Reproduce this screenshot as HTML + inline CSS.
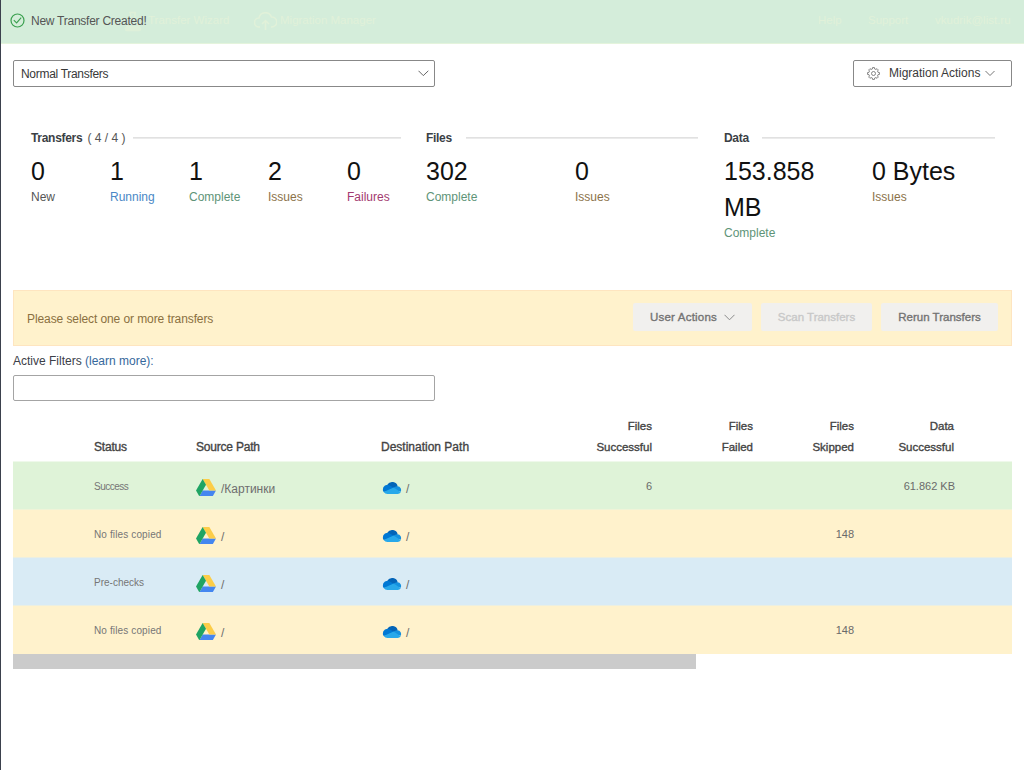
<!DOCTYPE html>
<html><head><meta charset="utf-8">
<style>
*{box-sizing:border-box;margin:0;padding:0}
html,body{width:1024px;height:770px;overflow:hidden;background:#fff}
body{position:relative;font-family:"Liberation Sans",sans-serif;color:#333}
.a{position:absolute;white-space:nowrap}
#lb{left:0;top:0;width:1px;height:770px;background:#3b414d}
#hdr{left:1px;top:0;width:1023px;height:44px;background:#d4edda;border-bottom:1px solid #e4f4dc}
.nav{color:#e1f1d9;font-size:11.5px}
.toast{color:#555;font-size:12px;letter-spacing:-0.25px;left:31px;top:14px}
.sel{border:1px solid #888;border-radius:2px;background:#fff}
.stitle{font-size:12px;font-weight:bold;color:#3b3f45;letter-spacing:-0.3px}
.sub{font-weight:normal;color:#555;letter-spacing:0;margin-left:2px}
.hline{height:2px;background:#ebebeb;border-top:1px solid #e1e1e1}
.num{font-size:25px;color:#111;line-height:36px}
.lbl{font-size:12px}
.c-new{color:#555}.c-run{color:#4a88c6}.c-ok{color:#5e9478}.c-iss{color:#8b7248}.c-fail{color:#a33a70}
#warn{left:13px;top:290px;width:999px;height:56px;background:#fff2cc;border:1px solid #fee5c0}
.btn{background:#f1f0ee;height:28px;border-radius:2px}
.btnt{font-size:11.5px;color:#737373;-webkit-text-stroke:0.35px #737373}
.th{font-size:12px;color:#444;line-height:21px;-webkit-text-stroke:0.35px #444;letter-spacing:-0.2px}
.row{left:13px;width:999px;height:48px}
.td{font-size:10px;color:#767676}
.tdn{font-size:11px;color:#6a6a6a}
.tdp{font-size:12px;color:#6e6e6e}
</style></head><body>
<div class="a" id="lb"></div>
<div class="a" id="hdr"></div>
<svg class="a" style="left:124px;top:11px" width="18" height="21" viewBox="0 0 18 21"><path d="M5 1.5 H12 M6.5 1.5 V9 L1.5 18 Q1.5 19.5 3 19.5 H15 Q16.5 19.5 16.5 18 L11 9 V1.5" fill="none" stroke="#def0d9" stroke-width="1.6"/><path d="M3 15 H15 L16 19 H2Z" fill="#def0d9"/></svg>
<div class="a nav" style="left:148px;top:14px">Transfer Wizard</div>
<svg class="a" style="left:254px;top:12px" width="23" height="19" viewBox="0 0 23 19"><path d="M6 15 H5 A4.5 4.5 0 0 1 5 6 A6.5 6.5 0 0 1 17.5 5 A4.8 4.8 0 0 1 18 15 H17" fill="none" stroke="#e1f1d9" stroke-width="1.5"/><path d="M11.5 18 V9 M8 12 L11.5 8.5 L15 12" fill="none" stroke="#e1f1d9" stroke-width="1.5"/></svg>
<div class="a nav" style="left:280px;top:14px">Migration Manager</div>
<div class="a nav" style="left:818px;top:14px">Help</div>
<div class="a nav" style="left:868px;top:14px">Support</div>
<div class="a nav" style="left:935px;top:14px">vkudrik@list.ru</div>
<svg class="a" style="left:10px;top:13px" width="15" height="15" viewBox="0 0 15 15"><circle cx="7.5" cy="7.5" r="6.5" fill="none" stroke="#3aa04f" stroke-width="1.2"/><path d="M3.8 7.2 L6.6 9.9 L11.2 4.6" fill="none" stroke="#3aa04f" stroke-width="1.1"/></svg>
<div class="a toast">New Transfer Created!</div>

<div class="a sel" style="left:13px;top:60px;width:422px;height:27px"></div>
<div class="a" style="left:21px;top:67px;font-size:12px;letter-spacing:-0.3px;color:#383838">Normal Transfers</div>
<svg class="a" style="left:418px;top:70px" width="11" height="7" viewBox="0 0 11 7"><path d="M0.5 0.8 L5.3 5.6 L10.3 0.8" fill="none" stroke="#555" stroke-width="0.9"/></svg>

<div class="a sel" style="left:853px;top:60px;width:159px;height:27px"></div>
<svg class="a" style="left:867px;top:67px" width="13" height="13" viewBox="0 0 13 13"><path d="M12.43 5.56 L12.43 7.44 L11.07 7.60 L10.51 8.96 L11.35 10.03 L10.03 11.35 L8.96 10.51 L7.60 11.07 L7.44 12.43 L5.56 12.43 L5.40 11.07 L4.04 10.51 L2.97 11.35 L1.65 10.03 L2.49 8.96 L1.93 7.60 L0.57 7.44 L0.57 5.56 L1.93 5.40 L2.49 4.04 L1.65 2.97 L2.97 1.65 L4.04 2.49 L5.40 1.93 L5.56 0.57 L7.44 0.57 L7.60 1.93 L8.96 2.49 L10.03 1.65 L11.35 2.97 L10.51 4.04 L11.07 5.40Z" fill="none" stroke="#6a6a6a" stroke-width="0.8" stroke-linejoin="round"/><circle cx="6.5" cy="6.5" r="2" fill="none" stroke="#6a6a6a" stroke-width="0.8"/></svg>
<div class="a" style="left:889px;top:66px;font-size:12px;color:#3a3a3a">Migration Actions</div>
<svg class="a" style="left:985px;top:70px" width="10" height="7" viewBox="0 0 10 7"><path d="M0.5 1 L5 5.5 L9.5 1" fill="none" stroke="#777" stroke-width="1"/></svg>

<!-- stats -->
<div class="a stitle" style="left:31px;top:131px">Transfers <span class="sub">( 4 / 4 )</span></div>
<div class="a hline" style="left:133px;top:137px;width:268px"></div>
<div class="a stitle" style="left:426px;top:131px">Files</div>
<div class="a hline" style="left:466px;top:137px;width:232px"></div>
<div class="a stitle" style="left:724px;top:131px">Data</div>
<div class="a hline" style="left:762px;top:137px;width:233px"></div>

<div class="a num" style="left:31px;top:153px">0</div><div class="a lbl c-new" style="left:31px;top:190px">New</div>
<div class="a num" style="left:110px;top:153px">1</div><div class="a lbl c-run" style="left:110px;top:190px">Running</div>
<div class="a num" style="left:189px;top:153px">1</div><div class="a lbl c-ok" style="left:189px;top:190px">Complete</div>
<div class="a num" style="left:268px;top:153px">2</div><div class="a lbl c-iss" style="left:268px;top:190px">Issues</div>
<div class="a num" style="left:347px;top:153px">0</div><div class="a lbl c-fail" style="left:347px;top:190px">Failures</div>
<div class="a num" style="left:426px;top:153px">302</div><div class="a lbl c-ok" style="left:426px;top:190px">Complete</div>
<div class="a num" style="left:575px;top:153px">0</div><div class="a lbl c-iss" style="left:575px;top:190px">Issues</div>
<div class="a num" style="left:724px;top:153px">153.858</div><div class="a num" style="left:724px;top:189px">MB</div><div class="a lbl c-ok" style="left:724px;top:226px">Complete</div>
<div class="a num" style="left:872px;top:153px">0 Bytes</div><div class="a lbl c-iss" style="left:872px;top:190px">Issues</div>

<!-- warning bar -->
<div class="a" id="warn"></div>
<div class="a" style="left:27px;top:312px;font-size:12px;letter-spacing:-0.09px;color:#8a7040">Please select one or more transfers</div>
<div class="a btn" style="left:633px;top:303px;width:119px"></div>
<div class="a btnt" style="left:650px;top:311px;letter-spacing:0.2px">User Actions</div>
<svg class="a" style="left:724px;top:314px" width="11" height="7" viewBox="0 0 11 7"><path d="M0.5 0.8 L5.5 5.8 L10.5 0.8" fill="none" stroke="#8a8a8a" stroke-width="1"/></svg>
<div class="a btn" style="left:761px;top:303px;width:111px"></div>
<div class="a btnt" style="left:761px;top:311px;width:111px;text-align:center;color:#c8c8c8;-webkit-text-stroke-color:#c8c8c8">Scan Transfers</div>
<div class="a btn" style="left:881px;top:303px;width:117px"></div>
<div class="a btnt" style="left:881px;top:311px;width:117px;text-align:center">Rerun Transfers</div>

<div class="a" style="left:13px;top:354px;font-size:12px;color:#3c4048">Active Filters <span style="color:#36689c">(learn more):</span></div>
<div class="a sel" style="left:13px;top:375px;width:422px;height:26px;border-color:#a4a4a4"></div>

<!-- table header -->
<div class="a th" style="left:94px;top:437px">Status</div>
<div class="a th" style="left:196px;top:437px">Source Path</div>
<div class="a th" style="left:381px;top:437px;letter-spacing:0px">Destination Path</div>
<div class="a th" style="left:560px;top:416px;width:92px;text-align:right;letter-spacing:0;font-size:11.5px">Files<br>Successful</div>
<div class="a th" style="left:680px;top:416px;width:73px;text-align:right;letter-spacing:0;font-size:11.5px">Files<br>Failed</div>
<div class="a th" style="left:780px;top:416px;width:74px;text-align:right;letter-spacing:0;font-size:11.5px">Files<br>Skipped</div>
<div class="a th" style="left:868px;top:416px;width:86px;text-align:right;letter-spacing:0;font-size:11.5px">Data<br>Successful</div>

<div class="a row" style="top:461px;height:48px;background:#dff3d8;border-top:1px solid #eff9eb"></div>
<div class="a row" style="top:509px;height:48px;background:#fff2cc;border-top:1px solid #eff3d8"></div>
<div class="a row" style="top:557px;height:48px;background:#d9ebf5;border-top:1px solid #ecefe1"></div>
<div class="a row" style="top:605px;height:49px;background:#fff2cc;border-top:1px solid #ecefe1"></div>

<div class="a td" style="left:94px;top:481px;letter-spacing:-0.5px">Success</div>
<svg class="a" style="left:196px;top:479px" width="20" height="17.4" viewBox="0 0 1443 1250"><path fill="#4486f0" d="M240.5 1250l240.5-416.7h962L1202.5 1250z"/><path fill="#fccd48" d="M962 833.3h481L962 0H481z"/><path fill="#1fa463" d="M0 833.3l240.5 416.7 481-833.3L481 0z"/></svg>
<div class="a tdp" style="left:221px;top:482px">/Картинки</div>
<svg class="a" style="left:382px;top:481px;transform:translate(0.5px,0.5px)" width="19" height="12.6" viewBox="0 0 24 16.5"><path d="M14.5 11l4.95-4.73A7.5 7.5 0 0 0 5.92 4.02L6 4z" fill="#0364b8"/><path d="M9.1 5.13A6 6 0 0 0 6 4.25h-.08A6 6 0 0 0 1.08 13.7L8.5 12.8l5.7-4.6z" fill="#0078d4"/><path d="M19.45 6.27h-.32a4.87 4.87 0 0 0-1.93.4l-3 1.26 3.3 4.06 5.9 1.44a4.88 4.88 0 0 0-3.95-7.16z" fill="#1490df"/><path d="M1.08 13.7A6 6 0 0 0 6 16.25h13.45a4.87 4.87 0 0 0 4.05-2.16L14.2 8.02z" fill="#28a8ea"/></svg>
<div class="a tdp" style="left:406px;top:482px">/</div>
<div class="a tdn" style="left:552px;width:100px;text-align:right;top:480px">6</div>
<div class="a tdn" style="left:855px;width:100px;text-align:right;top:480px">61.862 KB</div>
<div class="a td" style="left:94px;top:529px;letter-spacing:0.13px">No files copied</div>
<svg class="a" style="left:196px;top:527px" width="20" height="17.4" viewBox="0 0 1443 1250"><path fill="#4486f0" d="M240.5 1250l240.5-416.7h962L1202.5 1250z"/><path fill="#fccd48" d="M962 833.3h481L962 0H481z"/><path fill="#1fa463" d="M0 833.3l240.5 416.7 481-833.3L481 0z"/></svg>
<div class="a tdp" style="left:221px;top:530px">/</div>
<svg class="a" style="left:382px;top:529px;transform:translate(0.5px,0.5px)" width="19" height="12.6" viewBox="0 0 24 16.5"><path d="M14.5 11l4.95-4.73A7.5 7.5 0 0 0 5.92 4.02L6 4z" fill="#0364b8"/><path d="M9.1 5.13A6 6 0 0 0 6 4.25h-.08A6 6 0 0 0 1.08 13.7L8.5 12.8l5.7-4.6z" fill="#0078d4"/><path d="M19.45 6.27h-.32a4.87 4.87 0 0 0-1.93.4l-3 1.26 3.3 4.06 5.9 1.44a4.88 4.88 0 0 0-3.95-7.16z" fill="#1490df"/><path d="M1.08 13.7A6 6 0 0 0 6 16.25h13.45a4.87 4.87 0 0 0 4.05-2.16L14.2 8.02z" fill="#28a8ea"/></svg>
<div class="a tdp" style="left:406px;top:530px">/</div>
<div class="a tdn" style="left:754px;width:100px;text-align:right;top:528px">148</div>
<div class="a td" style="left:94px;top:577px">Pre-checks</div>
<svg class="a" style="left:196px;top:575px" width="20" height="17.4" viewBox="0 0 1443 1250"><path fill="#4486f0" d="M240.5 1250l240.5-416.7h962L1202.5 1250z"/><path fill="#fccd48" d="M962 833.3h481L962 0H481z"/><path fill="#1fa463" d="M0 833.3l240.5 416.7 481-833.3L481 0z"/></svg>
<div class="a tdp" style="left:221px;top:578px">/</div>
<svg class="a" style="left:382px;top:577px;transform:translate(0.5px,0.5px)" width="19" height="12.6" viewBox="0 0 24 16.5"><path d="M14.5 11l4.95-4.73A7.5 7.5 0 0 0 5.92 4.02L6 4z" fill="#0364b8"/><path d="M9.1 5.13A6 6 0 0 0 6 4.25h-.08A6 6 0 0 0 1.08 13.7L8.5 12.8l5.7-4.6z" fill="#0078d4"/><path d="M19.45 6.27h-.32a4.87 4.87 0 0 0-1.93.4l-3 1.26 3.3 4.06 5.9 1.44a4.88 4.88 0 0 0-3.95-7.16z" fill="#1490df"/><path d="M1.08 13.7A6 6 0 0 0 6 16.25h13.45a4.87 4.87 0 0 0 4.05-2.16L14.2 8.02z" fill="#28a8ea"/></svg>
<div class="a tdp" style="left:406px;top:578px">/</div>
<div class="a td" style="left:94px;top:625px;letter-spacing:0.13px">No files copied</div>
<svg class="a" style="left:196px;top:623px" width="20" height="17.4" viewBox="0 0 1443 1250"><path fill="#4486f0" d="M240.5 1250l240.5-416.7h962L1202.5 1250z"/><path fill="#fccd48" d="M962 833.3h481L962 0H481z"/><path fill="#1fa463" d="M0 833.3l240.5 416.7 481-833.3L481 0z"/></svg>
<div class="a tdp" style="left:221px;top:626px">/</div>
<svg class="a" style="left:382px;top:625px;transform:translate(0.5px,0.5px)" width="19" height="12.6" viewBox="0 0 24 16.5"><path d="M14.5 11l4.95-4.73A7.5 7.5 0 0 0 5.92 4.02L6 4z" fill="#0364b8"/><path d="M9.1 5.13A6 6 0 0 0 6 4.25h-.08A6 6 0 0 0 1.08 13.7L8.5 12.8l5.7-4.6z" fill="#0078d4"/><path d="M19.45 6.27h-.32a4.87 4.87 0 0 0-1.93.4l-3 1.26 3.3 4.06 5.9 1.44a4.88 4.88 0 0 0-3.95-7.16z" fill="#1490df"/><path d="M1.08 13.7A6 6 0 0 0 6 16.25h13.45a4.87 4.87 0 0 0 4.05-2.16L14.2 8.02z" fill="#28a8ea"/></svg>
<div class="a tdp" style="left:406px;top:626px">/</div>
<div class="a tdn" style="left:754px;width:100px;text-align:right;top:624px">148</div>
<div class="a" style="left:13px;top:654px;width:683px;height:15px;background:#cbcbcb"></div>
</body></html>
